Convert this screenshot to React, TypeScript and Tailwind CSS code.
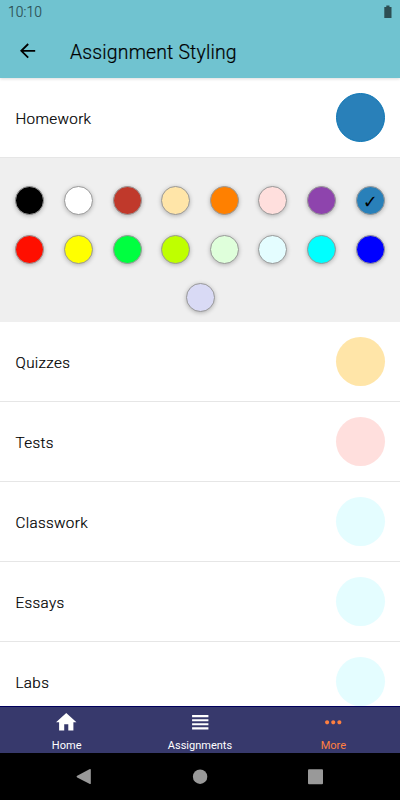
// src/App.tsx

import { MdHome, MdMoreHoriz, MdViewHeadline } from 'react-icons/md';

const swatches = [
  '#000000', '#ffffff', '#c0392b', '#ffe5a8', '#ff8000', '#ffdfdd', '#8e44ad', '#2980b9',
  '#ff0f00', '#ffff00', '#00ff40', '#bfff00', '#dfffdb', '#e4fdff', '#00ffff', '#0000ff',
  '#d9daf5',
];

const selected = '#2980b9';

const types = [
  { name: 'Quizzes', color: '#ffe5a8' },
  { name: 'Tests', color: '#ffdfdd' },
  { name: 'Classwork', color: '#e4fdff' },
  { name: 'Essays', color: '#e4fdff' },
  { name: 'Labs', color: '#e4fdff' },
];

function TypeRow({ name, color, ring }: { name: string; color: string; ring?: boolean }) {
  return (
    <div className="h-20 shrink-0 flex items-center justify-between pl-[15.5px] pr-[15.5px] border-b border-[#e6e6e6]">
      <span className="text-[15.2px] leading-5 font-light tracking-[0.35px] text-black [-webkit-text-stroke:0.2px] pt-[2px]">{name}</span>
      <div
        className={`size-[49px] mt-[0.6px] rounded-full ${ring ? 'border border-[#0d76b5]' : ''}`}
        style={{ backgroundColor: color }}
      />
    </div>
  );
}

export default function App() {
  return (
    <div className="w-[400px] h-[800px] flex flex-col overflow-hidden bg-white font-[Roboto,sans-serif]">

      {/* Status bar + header */}
      <header className="relative h-[78px] shrink-0 bg-[#70c3d0] shadow-[0_1px_3px_rgba(0,0,0,0.14)]">
        <div className="h-6 flex items-center justify-between pl-2 pr-[8px]">
          <span className="text-[13.8px] leading-6 font-light tracking-[0.1px] text-[#2d4e53] [-webkit-text-stroke:0.2px]">10:10</span>
          <svg className="w-[8px] h-[13px] mt-[-1px]" viewBox="0 0 8 13" fill="#2d4e53">
            <path d="M0.3 2h2V0.5h3.2V2h2v11H0.3z" />
          </svg>
        </div>
        <div className="h-[54px] flex items-center pl-5">
          <svg className="w-[16px] h-[16px]" viewBox="0 0 16 16" fill="none" stroke="#000" strokeWidth="1.8">
            <path d="M15.2 7.8H1.4M8.2 1 1.3 7.8l6.9 6.8" />
          </svg>
          <h1 className="ml-[34px] pt-[3px] text-[19.4px] leading-6 font-light tracking-[0.18px] text-black [-webkit-text-stroke:0.2px]">
            Assignment Styling
          </h1>
        </div>
      </header>

      {/* Assignment types */}
      <main className="flex-1 min-h-0 flex flex-col overflow-hidden">
        <TypeRow name="Homework" color="#2980b9" ring />

        {/* Color picker */}
        <div className="h-[164px] shrink-0 bg-[#efefef] flex flex-wrap justify-center content-start pl-[5.5px] pr-[5.4px] pt-[18.3px]">
          {swatches.map((color) => (
            <div key={color} className="w-[48.63px] h-[48.6px] flex items-center justify-center">
              <div
                className="size-[29px] rounded-full border border-[#999] shadow-[0_1px_4px_rgba(0,0,0,0.25)] flex items-center justify-center text-[18px] leading-none text-black"
                style={{ backgroundColor: color }}
              >
                {color === selected && <span className="pt-[2px] font-['DejaVu_Sans',sans-serif]">✓</span>}
              </div>
            </div>
          ))}
        </div>

        {types.map((type) => (
          <TypeRow key={type.name} name={type.name} color={type.color} />
        ))}
      </main>

      {/* Tab bar */}
      <nav className="h-[47px] shrink-0 flex bg-[#37396c] border-t border-[#00005c] text-[11px] leading-[14px] text-white">
        <div className="flex-1 flex flex-col items-center pt-[2.5px]">
          <MdHome className="size-[24.5px]" />
          <span className="mt-[5px]">Home</span>
        </div>
        <div className="flex-1 flex flex-col items-center pt-[2.5px]">
          <MdViewHeadline className="size-[24.5px]" />
          <span className="mt-[5px]">Assignments</span>
        </div>
        <div className="flex-1 flex flex-col items-center pt-[2.5px] text-[#ff8040]">
          <MdMoreHoriz className="size-[24.5px]" />
          <span className="mt-[5px]">More</span>
        </div>
      </nav>

      {/* System buttons */}
      <div className="h-[47px] shrink-0 bg-black">
        <svg className="w-[400px] h-[46px]" viewBox="0 0 400 46" fill="#999999">
          <path d="M77.2 22.8 89.4 16.2Q90.8 15.5 90.8 16.8V30.2Q90.8 31.5 89.4 30.8L77.2 24.4Q75.8 23.6 77.2 22.8z" />
          <circle cx="200.1" cy="23.7" r="7.2" />
          <rect x="308" y="16.2" width="15" height="15" rx="1" />
        </svg>
      </div>

    </div>
  );
}
